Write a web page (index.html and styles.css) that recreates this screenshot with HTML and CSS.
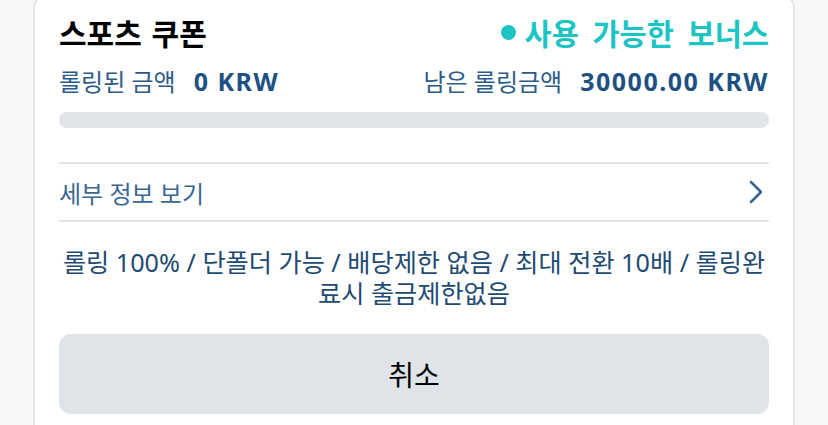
FILE: index.html
```html
<!DOCTYPE html>
<html lang="ko">
<head>
  <meta charset="UTF-8">
  <meta name="viewport" content="width=device-width, initial-scale=1.0">
  <title>스포츠 쿠폰</title>
  <link rel="stylesheet" href="styles.css">
</head>
<body>

  <!-- Coupon card -->
  <div class="coupon-card">
    <div class="coupon-head">
      <h2 class="coupon-title">스포츠 쿠폰</h2>
      <span class="coupon-status"><i class="status-dot"></i>사용 가능한 보너스</span>
    </div>

    <div class="rolling-row">
      <div class="rolling-item">
        <span class="rolling-label">롤링된 금액</span>
        <span class="rolling-value">0 KRW</span>
      </div>
      <div class="rolling-item">
        <span class="rolling-label">남은 롤링금액</span>
        <span class="rolling-value">30000.00 KRW</span>
      </div>
    </div>

    <div class="progress">
      <div class="progress-fill" style="width:0%"></div>
    </div>

    <a href="#" class="details-link">
      <span>세부 정보 보기</span>
      <svg class="chevron" width="14" height="24" viewBox="0 0 14 24">
        <path d="M2 2 L12 12 L2 22" fill="none" stroke="#3a6790" stroke-width="2.6" stroke-linecap="round" stroke-linejoin="round"/>
      </svg>
    </a>

    <p class="coupon-desc">롤링 100% / 단폴더 가능 / 배당제한 없음 / 최대 전환 10배 / 롤링완료시 출금제한없음</p>

    <button class="cancel-btn">취소</button>
  </div>

</body>
</html>
```

FILE: styles.css
```css
body {
  margin: 0;
  background-color: #f7f7f8;
  font-family: "Noto Sans", "Noto Sans CJK KR", sans-serif;
}

.coupon-card {
  margin: -6px 33px 0;
  padding: 18px 24px 24px;
  background-color: #fff;
  border: 2px solid #e4e6ea;
  border-radius: 14px;
}

.coupon-head {
  display: flex;
  justify-content: space-between;
  align-items: center;
  height: 36px;
}

.coupon-title {
  margin: 0;
  font-size: 30px;
  font-weight: 700;
  color: #000;
  word-spacing: 2px;
}

.coupon-status {
  display: flex;
  align-items: center;
  font-size: 29.5px;
  font-weight: 700;
  color: #1cc4c4;
  word-spacing: 6px;
}

.status-dot {
  width: 15px;
  height: 15px;
  margin-right: 9px;
  border-radius: 50%;
  background-color: #1cc4c4;
}

.rolling-row {
  display: flex;
  justify-content: space-between;
  margin-top: 17px;
  line-height: 28px;
}

.rolling-item {
  display: flex;
  align-items: baseline;
  gap: 18px;
}

.rolling-label {
  font-size: 24px;
  color: #2d5b87;
}

.rolling-value {
  font-size: 25px;
  font-weight: 700;
  color: #1d5183;
  letter-spacing: 1.5px;
}

.progress {
  height: 16px;
  margin-top: 16px;
  border-radius: 8px;
  background-color: #e1e4e9;
  overflow: hidden;
}

.progress-fill {
  height: 100%;
  background-color: #1cc4c4;
}

.details-link {
  display: flex;
  justify-content: space-between;
  align-items: center;
  height: 56px;
  margin-top: 34px;
  border-top: 2px solid #e1e4e9;
  border-bottom: 2px solid #e1e4e9;
  font-size: 24px;
  color: #3a6790;
  text-decoration: none;
}

.chevron {
  margin-right: 6px;
}

.coupon-desc {
  margin: 25px 0 0;
  font-size: 25.2px;
  line-height: 31px;
  text-align: center;
  color: #1f4a72;
}

.cancel-btn {
  display: block;
  width: 100%;
  height: 80px;
  margin-top: 25px;
  border: none;
  border-radius: 12px;
  background-color: #e0e3e8;
  font-family: "Noto Sans CJK KR", sans-serif;
  font-size: 28px;
  color: #000;
  cursor: pointer;
}
```
